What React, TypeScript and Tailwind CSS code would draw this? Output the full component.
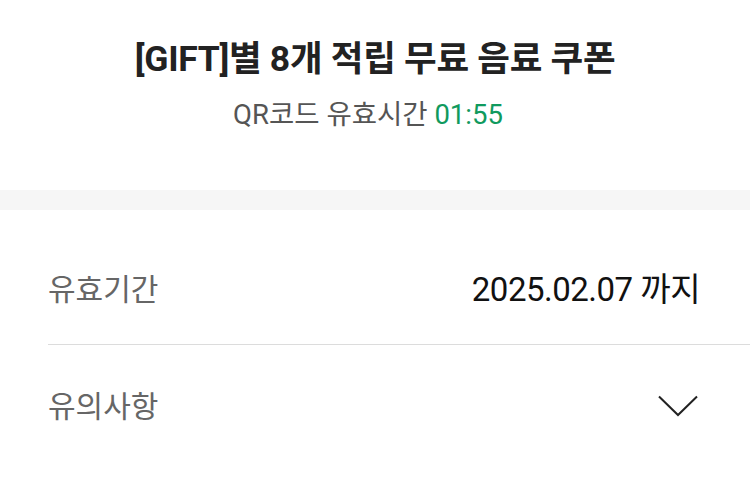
export default function App() {
  return (
    <div className="w-[750px] h-[494px] bg-white overflow-hidden" style={{ fontFamily: '"Roboto", "Noto Sans CJK KR", sans-serif' }}>
      <header className="flex flex-col items-center pt-[34px] h-[190px]">
        <h1 className="text-[35.5px] leading-[50px] font-bold text-[#222] tracking-[-0.3px]">[GIFT]별 8개 적립 무료 음료 쿠폰</h1>
        <p className="mt-[12px] mr-[14px] text-[27.5px] leading-[38px] text-[#555]">
          QR코드 유효시간 <span className="text-[#109a5e]">01:55</span>
        </p>
      </header>
      <div className="h-[20px] bg-[#f6f6f6]" />
      <section className="pl-[48px]">
        <div className="flex items-center justify-between pr-[50px] h-[135px] pt-[25px] border-b border-[#dcdcdc]">
          <span className="text-[30px] text-[#666]">유효기간</span>
          <span className="text-[33px] text-[#111] tracking-[-0.5px]">2025.02.07 까지</span>
        </div>
        <div className="flex items-center justify-between pr-[52px] h-[122px]">
          <span className="text-[30px] text-[#666]">유의사항</span>
          <svg width="40" height="22" viewBox="0 0 40 22" fill="none">
            <path d="M1 1.5 L20 20 L39 1.5" stroke="#222" strokeWidth="2" />
          </svg>
        </div>
      </section>
    </div>
  );
}
